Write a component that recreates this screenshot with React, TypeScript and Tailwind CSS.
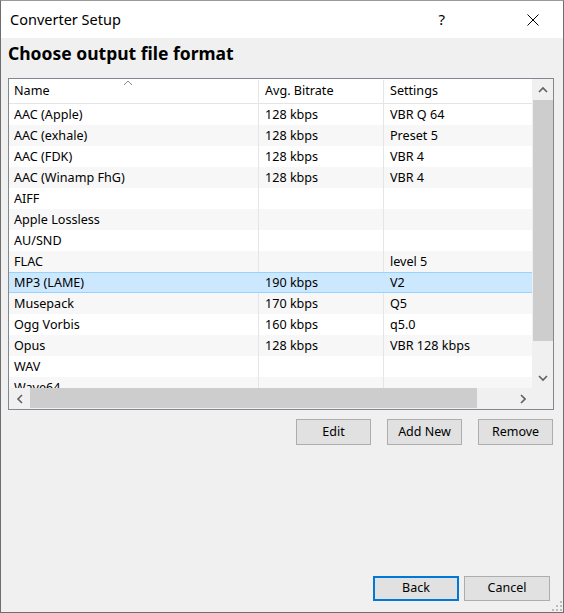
import type { ReactNode } from "react";

type Row = {
  readonly name: string;
  readonly bitrate: string;
  readonly settings: string;
};

const ROWS: readonly Row[] = [
  { name: "AAC (Apple)", bitrate: "128 kbps", settings: "VBR Q 64" },
  { name: "AAC (exhale)", bitrate: "128 kbps", settings: "Preset 5" },
  { name: "AAC (FDK)", bitrate: "128 kbps", settings: "VBR 4" },
  { name: "AAC (Winamp FhG)", bitrate: "128 kbps", settings: "VBR 4" },
  { name: "AIFF", bitrate: "", settings: "" },
  { name: "Apple Lossless", bitrate: "", settings: "" },
  { name: "AU/SND", bitrate: "", settings: "" },
  { name: "FLAC", bitrate: "", settings: "level 5" },
  { name: "MP3 (LAME)", bitrate: "190 kbps", settings: "V2" },
  { name: "Musepack", bitrate: "170 kbps", settings: "Q5" },
  { name: "Ogg Vorbis", bitrate: "160 kbps", settings: "q5.0" },
  { name: "Opus", bitrate: "128 kbps", settings: "VBR 128 kbps" },
  { name: "WAV", bitrate: "", settings: "" },
  { name: "Wave64", bitrate: "", settings: "" },
];

const SELECTED = 8;

function Chevron({ dir }: { readonly dir: "up" | "down" | "left" | "right" }) {
  const points = {
    up: "1,6 5,2 9,6",
    down: "1,2 5,6 9,2",
    left: "6,1 2,5 6,9",
    right: "3,1 7,5 3,9",
  }[dir];
  const vertical = dir === "up" || dir === "down";
  return (
    <svg
      viewBox={vertical ? "0 0 10 8" : "0 0 8 10"}
      className={vertical ? "h-[8px] w-[10px]" : "h-[10px] w-[8px]"}
      aria-hidden="true"
    >
      <polyline points={points} fill="none" stroke="#606060" strokeWidth="1.6" />
    </svg>
  );
}

function WinButton({ children, primary }: { readonly children: ReactNode; readonly primary?: boolean }) {
  return (
    <button
      type="button"
      className={
        primary
          ? "flex h-[25px] w-[86px] items-center justify-center border-2 border-[#0078d7] bg-[#e1e1e1] text-[12.5px] text-black"
          : "flex h-[25px] w-[86px] items-center justify-center border border-[#adadad] bg-[#e1e1e1] text-[12.5px] text-black"
      }
    >
      {children}
    </button>
  );
}

function SmallButton({ children }: { readonly children: ReactNode }) {
  return (
    <button
      type="button"
      className="flex h-[26px] w-[75px] items-center justify-center border border-[#adadad] bg-[#e1e1e1] text-[12.5px] text-black"
    >
      {children}
    </button>
  );
}

export default function App() {
  return (
    <div
      className="relative flex h-[613px] w-[564px] flex-col border border-[#6e6e6e] border-t-[#9a9a9a] bg-[#f0f0f0] text-black"
      style={{ fontFamily: '"Segoe UI", "Noto Sans", sans-serif' }}
    >
      {/* title bar */}
      <div className="flex h-[37px] shrink-0 items-center bg-white pl-[9px]">
        <span className="text-[14.5px] leading-none">Converter Setup</span>
        <span className="ml-auto mr-[82px] text-[15px] leading-none">?</span>
        <svg viewBox="0 0 12 12" className="mr-[24px] h-[12px] w-[12px]" aria-hidden="true">
          <path d="M0.5 0.5 L11.5 11.5 M11.5 0.5 L0.5 11.5" stroke="#000" strokeWidth="1" />
        </svg>
      </div>

      <div className="flex flex-1 flex-col px-[7px]">
        <h1 className="mt-[5px] h-[20px] text-[17.5px] font-bold leading-[20px]">Choose output file format</h1>

        {/* list view */}
        <div className="mt-[15px] grid h-[332px] w-[546px] grid-cols-[523px_21px] grid-rows-[309px_21px] border border-[#828790] bg-white">
          <div className="relative overflow-hidden text-[12.6px]">
            <div className="flex h-[25px] border-b border-[#e5e5e5] pt-[1px]">
              <div className="relative flex w-[250px] items-center border-r border-[#e5e5e5] pl-[5px]">
                Name
                <svg viewBox="0 0 10 6" className="absolute left-[114px] top-[0px] h-[6px] w-[10px]" aria-hidden="true">
                  <polyline points="1,5 5,1 9,5" fill="none" stroke="#8a8a8a" strokeWidth="1" />
                </svg>
              </div>
              <div className="flex w-[125px] items-center border-r border-[#e5e5e5] pl-[6px]">Avg. Bitrate</div>
              <div className="flex flex-1 items-center pl-[6px]">Settings</div>
            </div>
            {ROWS.map((row, i) => {
              const selected = i === SELECTED;
              const bg = selected
                ? "border-y border-[#99d1ff] bg-[#cce8ff]"
                : i % 2 === 1
                  ? "bg-[#f7f7f7]"
                  : "bg-white";
              const sep = selected ? "" : "border-r border-[#e5e5e5]";
              return (
                <div key={row.name} className={`flex h-[21px] ${bg}`}>
                  <div className={`flex w-[250px] items-center pl-[5px] pt-[2px] ${sep}`}>{row.name}</div>
                  <div className={`flex w-[125px] items-center pl-[6px] pt-[2px] ${sep}`}>{row.bitrate}</div>
                  <div className="flex flex-1 items-center pl-[6px] pt-[2px]">{row.settings}</div>
                </div>
              );
            })}
          </div>

          {/* vertical scrollbar */}
          <div className="flex flex-col bg-[#f0f0f0]">
            <div className="flex h-[21px] items-center justify-center">
              <Chevron dir="up" />
            </div>
            <div className="ml-[1px] h-[241px] bg-[#cdcdcd]" />
            <div className="flex-1" />
            <div className="flex h-[21px] items-center justify-center">
              <Chevron dir="down" />
            </div>
          </div>

          {/* horizontal scrollbar */}
          <div className="flex bg-[#f0f0f0]">
            <div className="flex w-[21px] items-center justify-center">
              <Chevron dir="left" />
            </div>
            <div className="mb-[1px] w-[447px] bg-[#cdcdcd]" />
            <div className="flex-1" />
            <div className="flex w-[21px] items-center justify-center">
              <Chevron dir="right" />
            </div>
          </div>
          <div className="bg-[#f0f0f0]" />
        </div>

        <div className="mt-[9px] flex justify-end gap-[16px] pr-[3px]">
          <SmallButton>Edit</SmallButton>
          <SmallButton>Add New</SmallButton>
          <SmallButton>Remove</SmallButton>
        </div>

        <div className="mb-[11px] mt-auto flex justify-end gap-[5px] pr-[6px]">
          <WinButton primary>Back</WinButton>
          <WinButton>Cancel</WinButton>
        </div>
      </div>

      {/* resize grip */}
      <svg viewBox="0 0 10 10" className="absolute bottom-[1px] right-[1px] h-[10px] w-[10px]" aria-hidden="true">
        {[
          [8, 0],
          [8, 4],
          [4, 4],
          [8, 8],
          [4, 8],
          [0, 8],
        ].map(([x, y]) => (
          <rect key={`${x}-${y}`} x={x} y={y} width="2" height="2" fill="#bcbcbc" />
        ))}
      </svg>
    </div>
  );
}
